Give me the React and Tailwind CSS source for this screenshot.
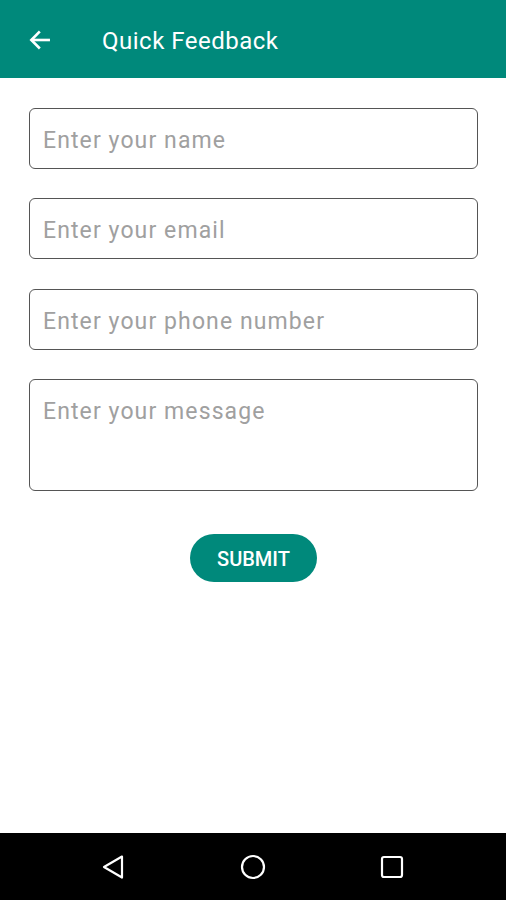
export default function App() {
  const font = { fontFamily: "Roboto, 'Noto Sans', sans-serif" };
  const field = "border-[1.5px] border-[#555] rounded-[6px] px-[13px] text-[23px] tracking-[1.1px] text-[#a0a0a0]";
  return (
    <div className="w-[506px] h-[900px] bg-white flex flex-col" style={font}>
      <div className="h-[78px] bg-[#00897b] flex items-center shrink-0">
        <svg width="26" height="26" viewBox="0 0 24 24" className="ml-[27px] mt-[2px]" fill="none" stroke="white" strokeWidth="2.4" strokeLinecap="square">
          <path d="M20 12H5" />
          <path d="M11 5l-7 7 7 7" strokeLinejoin="miter" />
        </svg>
        <div className="ml-[49px] mt-[3px] text-white text-[24px] tracking-[0.5px] leading-none">Quick Feedback</div>
      </div>
      <div className="flex-1 flex flex-col pl-[29px] pr-[28px] pt-[30px]">
        <div className={`h-[61px] flex items-center pt-[5px] ${field}`}>Enter your name</div>
        <div className={`mt-[29px] h-[61px] flex items-center pt-[5px] ${field}`}>Enter your email</div>
        <div className={`mt-[30px] h-[61px] flex items-center pt-[5px] ${field}`}>Enter your phone number</div>
        <div className={`mt-[29px] h-[112px] pt-[19px] leading-[26px] ${field}`}>Enter your message</div>
        <div className="flex justify-center mt-[43px]">
          <div className="w-[127px] h-[48px] rounded-full bg-[#00897b] flex items-center justify-center text-white text-[20px] font-medium pt-[1px]">SUBMIT</div>
        </div>
      </div>
      <div className="h-[67px] bg-black shrink-0 flex items-center justify-between px-[100px]">
        <svg width="28" height="28" viewBox="0 0 28 28" fill="none" stroke="white" strokeWidth="2.2" strokeLinejoin="round">
          <path d="M22 3.5L4 14l18 10.5z" />
        </svg>
        <svg width="28" height="28" viewBox="0 0 28 28" fill="none" stroke="white" strokeWidth="2.2">
          <circle cx="14" cy="14" r="11" />
        </svg>
        <svg width="28" height="28" viewBox="0 0 28 28" fill="none" stroke="white" strokeWidth="2.2">
          <rect x="4" y="4" width="20" height="20" rx="2" />
        </svg>
      </div>
    </div>
  );
}
